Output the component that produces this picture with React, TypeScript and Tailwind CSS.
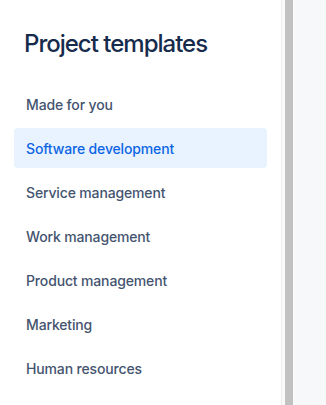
const items = [
  'Made for you',
  'Software development',
  'Service management',
  'Work management',
  'Product management',
  'Marketing',
  'Human resources',
];

export default function App() {
  const active = 'Software development';

  return (
    <div
      className="flex h-[405px] w-[326px] overflow-hidden bg-white"
      style={{ fontFamily: 'Inter, "Noto Sans", sans-serif' }}
    >
      <aside className="w-[281px] shrink-0 bg-white px-[14px]">
        <h1 className="mt-[30px] pl-[10px] text-[24px] leading-[28px] font-medium tracking-[-1px] text-[#172b4d]">
          Project templates
        </h1>
        <nav className="mt-[26px] flex flex-col gap-[4px]">
          {items.map((label) => {
            const isActive = label === active;
            return (
              <button
                key={label}
                type="button"
                className={
                  isActive
                    ? 'flex h-[40px] items-center rounded-[4px] bg-[#e9f2ff] px-[12px] text-left text-[14px] font-medium tracking-[-0.15px] text-[#0c66e4]'
                    : 'flex h-[40px] items-center rounded-[4px] px-[12px] text-left text-[14px] font-medium tracking-[-0.15px] text-[#44546f]'
                }
              >
                {label}
              </button>
            );
          })}
        </nav>
      </aside>

      {/* scrollbar */}
      <div className="flex w-[14px] shrink-0 border-l border-[#ececec] bg-[#fafafa] pl-[3px] pr-[2px]">
        <div className="w-full bg-[#c1c1c1]" />
      </div>

      <main className="flex-1 bg-[#f7f8f9]" />
    </div>
  );
}
